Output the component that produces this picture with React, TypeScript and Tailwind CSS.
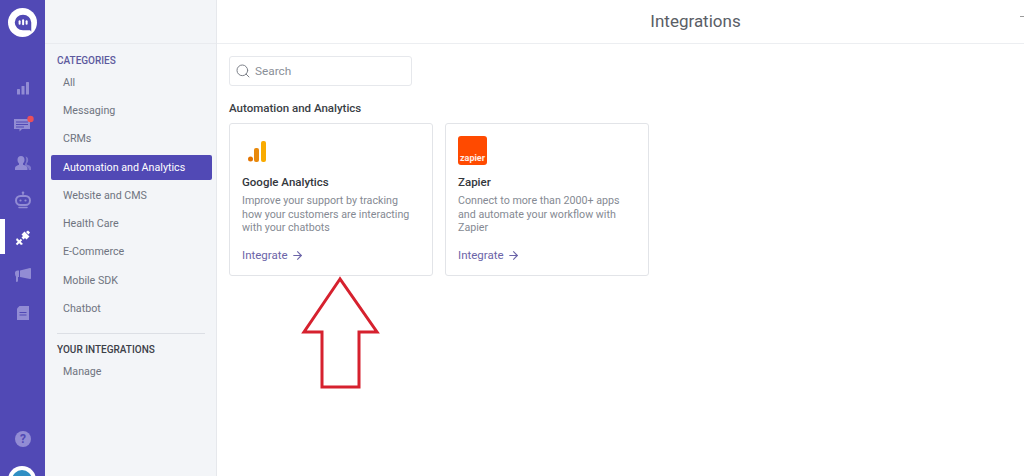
import type { ReactNode } from 'react'
import { ArrowRight, Search } from 'lucide-react'

const categories = [
  'All',
  'Messaging',
  'CRMs',
  'Automation and Analytics',
  'Website and CMS',
  'Health Care',
  'E-Commerce',
  'Mobile SDK',
  'Chatbot',
]

function RailIcon({ children, active }: { children: ReactNode; active?: boolean }) {
  return (
    <div className="relative flex h-[37.5px] w-[45px] items-center justify-center">
      {active ? <div className="absolute left-0 top-0 h-[35px] w-[5px] bg-white" /> : null}
      {children}
    </div>
  )
}

function Rail() {
  const c = '#928cd4'
  return (
    <aside className="relative flex h-full w-[45px] shrink-0 flex-col items-center overflow-hidden bg-[#5149b5]">
      <div className="mt-[8px] flex h-[29px] w-[29px] items-center justify-center rounded-full bg-white">
        <svg width="22" height="22" viewBox="0 0 20 20">
          <path d="M10 2.500a7.500 7 0 0 0 0 14h6.500l1 1.500v-8.500a7.500 7 0 0 0-7.500-7z" fill="#5149b5" />
          <rect x="6" y="7.500" width="1.800" height="4" rx=".9" fill="#fff" />
          <rect x="9.200" y="6.500" width="1.800" height="5.500" rx=".9" fill="#fff" />
          <rect x="12.400" y="7.500" width="1.800" height="4" rx=".9" fill="#fff" />
        </svg>
      </div>
      <div className="mt-[32px] flex flex-col">
        <RailIcon>
          <svg width="14" height="14" viewBox="0 0 14 14" fill={c}>
            <rect x="1" y="8" width="3" height="5.500" rx=".5" />
            <rect x="5.500" y="5" width="3" height="8.500" rx=".5" />
            <rect x="10" y="1" width="3" height="12.500" rx=".5" />
          </svg>
        </RailIcon>
        <RailIcon>
          <svg width="22" height="20" viewBox="0 0 22 20" className="overflow-visible">
            <path d="M2 4h16v10H10l-2.500 2.500V14H2z" fill={c} />
            <path d="M4 7h12M4 9.500h12M4 12h8" stroke="#5149b5" strokeWidth="1" />
            <circle cx="18.500" cy="4" r="3.200" fill="#ea4f5a" />
          </svg>
        </RailIcon>
        <RailIcon>
          <svg width="18" height="16" viewBox="0 0 18 16" fill={c}>
            <path d="M7 1c2.200 0 3.500 1.600 3.500 3.800 0 1.700-.7 3-1.500 3.800v1.200c2 .6 4.500 1.500 4.500 3.200V15H1v-2c0-1.700 2.500-2.600 4-3.200V8.600C4.200 7.800 3.500 6.500 3.500 4.800 3.500 2.600 4.800 1 7 1z" />
            <path d="M11 1.500c2 0 3.200 1.500 3.200 3.400 0 1.500-.6 2.700-1.400 3.500v1c1.600.5 4.200 1.400 4.200 3V15h-2.300c0-2.500-1.900-3.700-3.700-4.500V9c.8-1 1.300-2.500 1.300-4.200 0-1.200-.3-2.300-.9-3.200.2-.1.400-.1.600-.1z" opacity=".7" />
          </svg>
        </RailIcon>
        <RailIcon>
          <svg width="18" height="18" viewBox="0 0 18 18" fill="none" stroke={c}>
            <circle cx="9" cy="1.800" r="1.300" fill={c} stroke="none" />
            <path d="M9 3v2" strokeWidth="1.200" />
            <rect x="2" y="5" width="14" height="9" rx="4.500" strokeWidth="2" />
            <circle cx="6.500" cy="9.500" r="1.100" fill={c} stroke="none" />
            <circle cx="11.500" cy="9.500" r="1.100" fill={c} stroke="none" />
            <path d="M5 16.500h8" strokeWidth="1.500" strokeLinecap="round" />
          </svg>
        </RailIcon>
        <RailIcon active>
          <svg width="16" height="16" viewBox="0 0 16 16" fill="#fff">
            <path d="M9.500 1.500l5 5-3 3-1.500-1.500-1.500 1.500-2-2L8 6 6.500 4.500z" />
            <path d="M6.500 9.500l-5 5" stroke="#fff" strokeWidth="2" />
            <path d="M2 8l6 6-2 1-5-5z" />
            <path d="M11 2l2-1.500 2 2L13.500 4.500z" />
          </svg>
        </RailIcon>
        <RailIcon>
          <svg width="18" height="16" viewBox="0 0 18 16" fill={c}>
            <path d="M6 3.500L16 1c.6 0 1 .5 1 1v9c0 .6-.4 1-1 1L6 10z" />
            <path d="M1 6c0-1.400 1-2.500 2.500-2.500H5V10H4v3.500c0 .8-.6 1.500-1.200 1.500S2 14.300 2 13.500V9.500C1.400 9 1 7.500 1 6z" />
          </svg>
        </RailIcon>
        <RailIcon>
          <svg width="14" height="16" viewBox="0 0 14 16">
            <path d="M3.500 1H13v14H1V3.500z" fill={c} />
            <path d="M3.500 7.500h7M3.500 10h7" stroke="#5149b5" strokeWidth="1" />
          </svg>
        </RailIcon>
      </div>
      <div className="absolute left-[15px] top-[431px] flex h-4 w-4 items-center justify-center rounded-full bg-[#928cd4] text-[12px] font-bold leading-none text-[#5149b5]">
        ?
      </div>
      <div className="absolute left-[8px] top-[466px] flex h-[28px] w-[28px] items-center justify-center rounded-full bg-white">
        <div className="h-[20px] w-[20px] rounded-full bg-[#2f8fc4]" />
      </div>
    </aside>
  )
}

function CategoryPanel() {
  return (
    <nav className="flex h-full w-[172px] shrink-0 flex-col border-r border-[#e6e8ec] bg-[#f3f5f8]">
      <div className="h-[44px] shrink-0 border-b border-[#e9ebef]" />
      <h2 className="ml-[12px] mt-[10px] text-[10px] font-medium leading-[14px] text-[#5d5a9e]">CATEGORIES</h2>
      <ul className="mt-[0.5px] flex flex-col">
        {categories.map((name) => (
          <li key={name} className="flex h-[28.3px] items-center">
            <span
              className={
                name === 'Automation and Analytics'
                  ? 'ml-[6px] mr-[4px] flex h-[25px] flex-1 items-center rounded-[2px] bg-[#5149b5] pl-[12px] text-[10.7px] text-white'
                  : 'ml-[18px] text-[10.7px] text-[#6f7480]'
              }
            >
              {name}
            </span>
          </li>
        ))}
      </ul>
      <div className="ml-[12px] mr-[11px] mt-[9.5px] border-t border-[#dcdfe5]" />
      <h2 className="ml-[12px] mt-[9px] text-[10px] font-medium leading-[14px] text-[#3c4048]">YOUR INTEGRATIONS</h2>
      <div className="ml-[18px] mt-[1px] flex h-[28.3px] items-center text-[10.7px] text-[#6f7480]">Manage</div>
    </nav>
  )
}

function AnalyticsLogo() {
  return (
    <svg width="20" height="21" viewBox="0 0 20 21">
      <circle cx="2.500" cy="18" r="2.500" fill="#e37400" />
      <rect x="6" y="7" width="5" height="14" rx="2" fill="#e8890c" />
      <rect x="13" y="0" width="5" height="21" rx="2" fill="#f9ab00" />
    </svg>
  )
}

function ZapierLogo() {
  return (
    <div className="flex h-[29px] w-[29px] items-end justify-center rounded-[3px] bg-[#ff4a00] pb-[2px] text-[9px] font-bold leading-[10px] text-white/90">
      zapier
    </div>
  )
}

function IntegrationCard({ logo, title, lines }: { logo: ReactNode; title: string; lines: string[] }) {
  return (
    <div className="flex h-[153px] w-[204px] flex-col rounded-[3px] border border-[#e2e4e8] bg-white pl-[12px]">
      <div className="flex h-[41px] items-end">{logo}</div>
      <h3 className="mt-[9px] text-[11.500px] font-medium leading-[16px] text-[#33373d]">{title}</h3>
      <p className="mt-[4px] text-[10.700px] leading-[13.500px] text-[#858a93]">
        {lines.map((line) => (
          <span key={line} className="block">
            {line}
          </span>
        ))}
      </p>
      <div className="mt-[12.500px] flex items-center gap-[3px] text-[11.500px] leading-[16px] text-[#6b64a8]">
        Integrate
        <ArrowRight size={13} strokeWidth={2} />
      </div>
    </div>
  )
}

export default function App() {
  return (
    <div className="relative flex h-[476px] w-[1024px] overflow-hidden bg-white font-['Roboto',sans-serif]">
      <Rail />
      <CategoryPanel />
      <main className="flex min-w-0 flex-1 flex-col">
        <header className="relative flex h-[44px] shrink-0 items-center justify-center border-b border-[#eceef1] pl-[150px] text-[17px] text-[#5a5e66]">
          Integrations
          <span className="absolute right-0 top-[16px] h-px w-[4px] bg-[#9a9a9a]" />
        </header>
        <div className="pl-[12px] pt-[12px]">
          <div className="flex h-[30px] w-[183px] items-center gap-[4px] rounded-[3px] border border-[#e6e8ec] pl-[5px] text-[11.800px] text-[#8a8f98]">
            <Search size={16} strokeWidth={1.500} className="text-[#7d8189]" />
            <span className="pt-[2px]">Search</span>
          </div>
          <h2 className="mt-[14px] text-[11.500px] font-medium leading-[16px] text-[#3a3e45]">Automation and Analytics</h2>
          <div className="mt-[7px] flex gap-[12px]">
            <IntegrationCard
              logo={
                <div className="mb-[3px] ml-[6px]">
                  <AnalyticsLogo />
                </div>
              }
              title="Google Analytics"
              lines={['Improve your support by tracking', 'how your customers are interacting', 'with your chatbots']}
            />
            <IntegrationCard
              logo={<ZapierLogo />}
              title="Zapier"
              lines={['Connect to more than 2000+ apps', 'and automate your workflow with', 'Zapier']}
            />
          </div>
        </div>
      </main>
      <svg className="absolute left-[300px] top-[274px]" width="82" height="118" viewBox="0 0 82 118" fill="none">
        <path d="M40 5L4 58h18v55h37V58h18z" stroke="#d6212e" strokeWidth="3" strokeLinejoin="miter" />
      </svg>
    </div>
  )
}
